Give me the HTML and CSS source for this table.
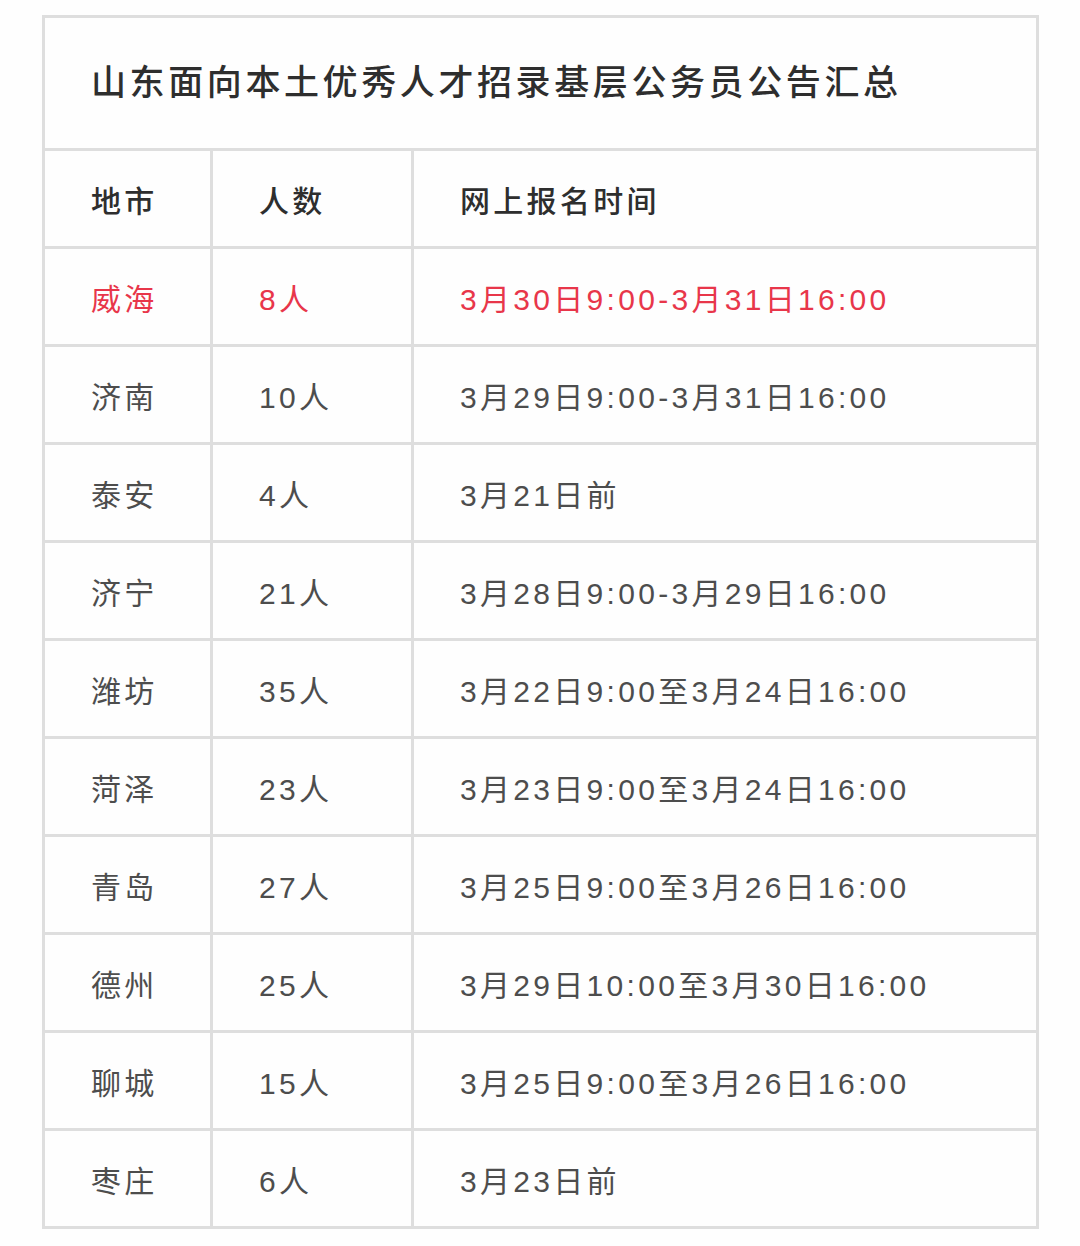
FILE: index.html
```html
<!DOCTYPE html>
<html lang="zh">
<head>
<meta charset="utf-8">
<title>山东面向本土优秀人才招录基层公务员公告汇总</title>
<link rel="stylesheet" href="styles.css">
</head>
<body>
<table class="summary">
  <colgroup>
    <col class="c-city">
    <col class="c-num">
    <col class="c-time">
  </colgroup>
  <thead>
    <tr class="title-row"><th colspan="3" class="title">山东面向本土优秀人才招录基层公务员公告汇总</th></tr>
    <tr class="head-row"><th>地市</th><th>人数</th><th>网上报名时间</th></tr>
  </thead>
  <tbody>
    <tr class="hl"><td>威海</td><td>8人</td><td>3月30日9:00-3月31日16:00</td></tr>
    <tr><td>济南</td><td>10人</td><td>3月29日9:00-3月31日16:00</td></tr>
    <tr><td>泰安</td><td>4人</td><td>3月21日前</td></tr>
    <tr><td>济宁</td><td>21人</td><td>3月28日9:00-3月29日16:00</td></tr>
    <tr><td>潍坊</td><td>35人</td><td>3月22日9:00至3月24日16:00</td></tr>
    <tr><td>菏泽</td><td>23人</td><td>3月23日9:00至3月24日16:00</td></tr>
    <tr><td>青岛</td><td>27人</td><td>3月25日9:00至3月26日16:00</td></tr>
    <tr><td>德州</td><td>25人</td><td>3月29日10:00至3月30日16:00</td></tr>
    <tr><td>聊城</td><td>15人</td><td>3月25日9:00至3月26日16:00</td></tr>
    <tr><td>枣庄</td><td>6人</td><td>3月23日前</td></tr>
  </tbody>
</table>
</body>
</html>
```
FILE: styles.css
```css
html, body {
  margin: 0;
  padding: 0;
  background: #fefefe;
}
body {
  padding: 15px 0 0 42px;
  font-family: "Liberation Sans", "Noto Sans CJK SC", sans-serif;
  color: #4d4d4d;
}
.summary {
  border-collapse: collapse;
  width: 997px;
  table-layout: fixed;
  border: 3px solid #dedede;
}
.c-city { width: 168px; }
.c-num { width: 201px; }
.summary th,
.summary td {
  border: 3px solid #dedede;
  padding: 7px 0 0 46px;
  text-align: left;
  vertical-align: middle;
  font-size: 30px;
  letter-spacing: 3.3px;
  line-height: 1;
  white-space: nowrap;
}
.title-row { height: 133px; }
.summary th.title {
  font-size: 35px;
  font-weight: 500;
  letter-spacing: 3.6px;
  color: #2e2e2e;
  padding: 0 0 2px 46px;
}
.head-row { height: 98px; }
.head-row th {
  font-weight: 500;
  color: #2e2e2e;
}
tbody tr { height: 98px; }
.hl td { color: #e8364a; }
```
